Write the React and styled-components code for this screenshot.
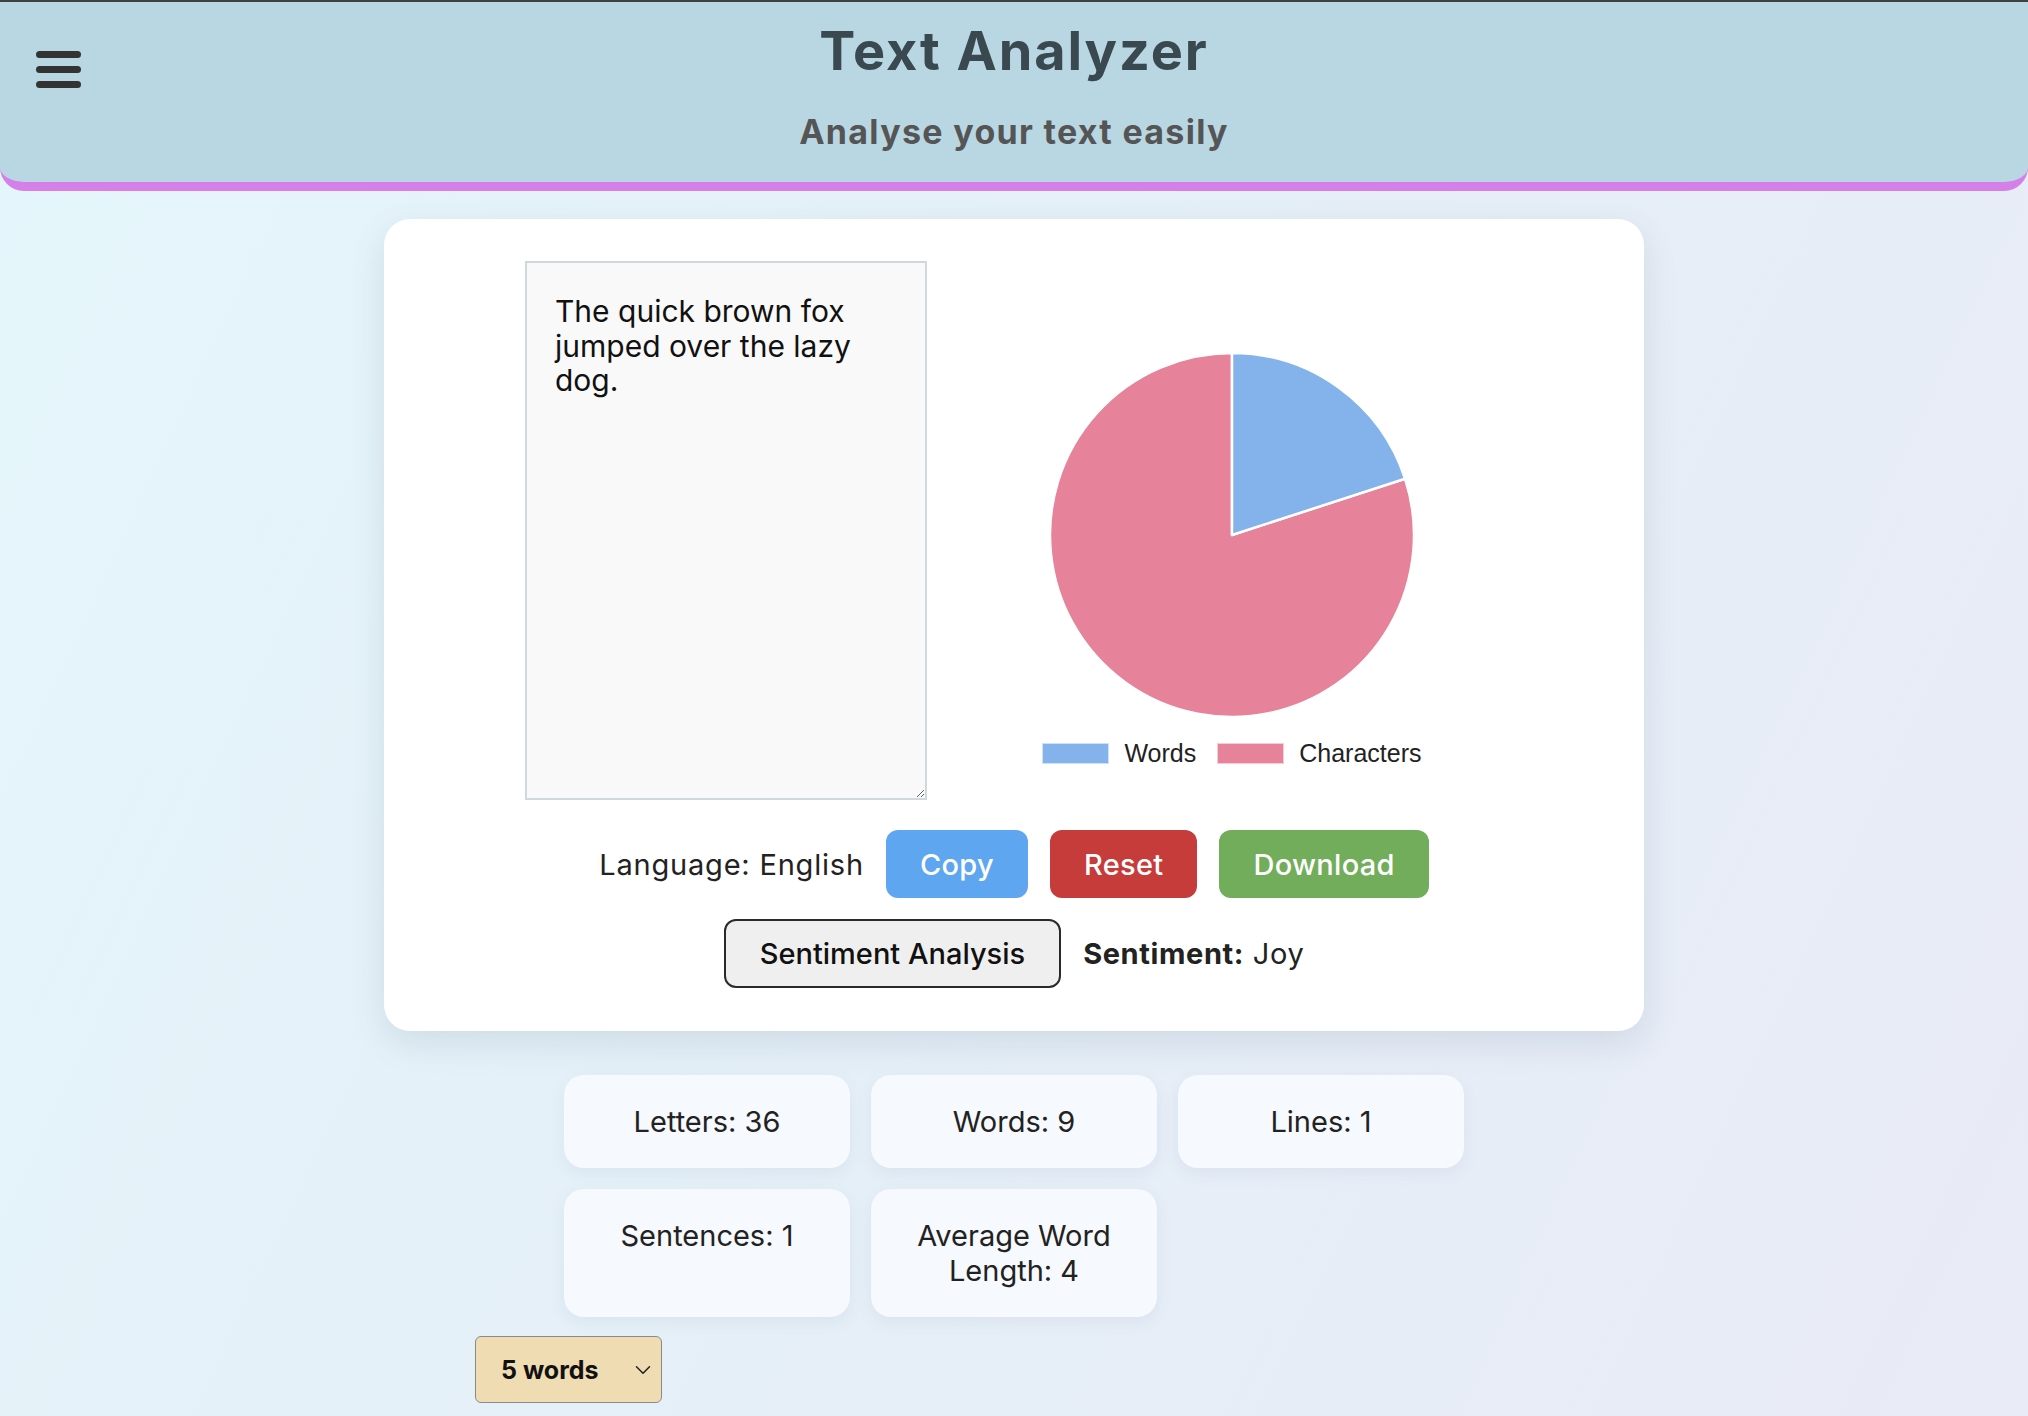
import React from "react";
import styled, { createGlobalStyle } from "styled-components";
import { ChevronDown } from "lucide-react";

const GlobalStyle = createGlobalStyle`
  *, *::before, *::after { box-sizing: border-box; }
  html, body { margin: 0; padding: 0; }
  body {
    min-height: 100vh;
    background: linear-gradient(115deg, #e4f6fb 0%, #e5eff7 50%, #e9ebf6 100%);
    font-family: "Inter", "Noto Sans", sans-serif;
    border-top: 2px solid #403f42;
    color: #222;
  }
`;

const Page = styled.div`
  display: flex;
  flex-direction: column;
  align-items: center;
  padding-bottom: 11px;
`;

const Header = styled.header`
  width: 100%;
  display: grid;
  grid-template-columns: 1fr auto 1fr;
  padding: 17px 36px 30px;
  background: #b9d7e3;
  border-bottom: 9px solid #d580e8;
  border-radius: 0 0 24px 24px;
`;

const MenuButton = styled.div`
  justify-self: start;
  margin-top: 32px;
  display: flex;
  flex-direction: column;
  gap: 8px;
`;

const MenuBar = styled.span`
  display: block;
  width: 45px;
  height: 7px;
  border-radius: 4px;
  background: #333;
`;

const TitleBlock = styled.div`
  text-align: center;
`;

const Title = styled.h1`
  margin: 0;
  font-size: 54px;
  line-height: 64px;
  font-weight: 700;
  color: #3a4850;
  letter-spacing: 1.9px;
`;

const Subtitle = styled.h2`
  margin: 29px 0 0;
  font-size: 34px;
  line-height: 40px;
  font-weight: 700;
  color: #555;
  letter-spacing: 1.3px;
`;

const MainCard = styled.main`
  margin-top: 28px;
  width: 1260px;
  background: #fff;
  border-radius: 26px;
  padding: 42px 0 43px;
  box-shadow: 0 12px 34px rgba(70, 100, 130, 0.14);
`;

const TopRow = styled.div`
  display: flex;
  justify-content: center;
  gap: 34px;
`;

const TextArea = styled.textarea`
  width: 402px;
  height: 539px;
  border: 2px solid #cfd8dd;
  background: #f9f9f9;
  padding: 31px 28px;
  font-family: "Inter", "Noto Sans", sans-serif;
  font-size: 30px;
  line-height: 34.5px;
  color: #111;
  outline: none;
  resize: both;
`;

const ChartCol = styled.div`
  width: 542px;
  display: flex;
  flex-direction: column;
  align-items: center;
  padding-top: 90px;
`;

const Legend = styled.div`
  margin-top: 20px;
  display: flex;
  align-items: center;
  gap: 21px;
  font-family: "Liberation Sans", Arial, sans-serif;
  font-size: 25px;
  line-height: 28px;
  color: #222;
`;

const LegendItem = styled.div`
  display: flex;
  align-items: center;
  gap: 15px;
`;

const Swatch = styled.span`
  display: block;
  width: 67px;
  height: 21px;
  background: ${(p) => p.$color};
  border: 1px solid rgba(255, 255, 255, 0.6);
`;

const ControlsRow = styled.div`
  margin-top: ${(p) => p.$mt}px;
  display: flex;
  justify-content: center;
  align-items: center;
  gap: 22px;
`;

const Label = styled.span`
  font-size: 29px;
  color: #222;
  letter-spacing: 0.8px;
`;

const ActionButton = styled.button`
  height: 68px;
  padding: 0 34px;
  border: none;
  border-radius: 12px;
  background: ${(p) => p.$bg};
  color: #fff;
  font-family: "Inter", "Noto Sans", sans-serif;
  font-size: 29px;
  font-weight: 500;
  letter-spacing: 0.3px;
  cursor: pointer;
`;

const OutlineButton = styled.button`
  height: 69px;
  padding: 0 34px;
  border: 2px solid #2a2a2a;
  border-radius: 12px;
  background: #efefef;
  color: #111;
  font-family: "Inter", "Noto Sans", sans-serif;
  font-size: 29px;
  font-weight: 500;
  cursor: pointer;
`;

const SentimentText = styled.span`
  font-size: 29px;
  color: #222;
  letter-spacing: 0.6px;
  strong {
    font-weight: 700;
  }
`;

const StatsGrid = styled.section`
  margin-top: 44px;
  display: grid;
  grid-template-columns: repeat(3, 286px);
  gap: 21px;
  justify-content: center;
`;

const StatCard = styled.div`
  background: #f6f9fd;
  border-radius: 20px;
  padding: 29px;
  text-align: center;
  font-size: 29px;
  line-height: 35px;
  color: #222;
  box-shadow: 0 5px 16px rgba(80, 110, 150, 0.08);
`;

const SelectRow = styled.div`
  width: 1078px;
  margin-top: 19px;
`;

const SelectWrap = styled.div`
  position: relative;
  display: inline-block;
`;

const Select = styled.select`
  appearance: none;
  -webkit-appearance: none;
  width: 187px;
  height: 67px;
  padding: 0 0 0 25px;
  background: #efdcb3;
  border: 1px solid #8a8a8a;
  border-radius: 6px;
  font-family: "Inter", "Noto Sans", sans-serif;
  font-size: 25px;
  font-weight: 700;
  color: #111;
`;

const SelectIcon = styled.span`
  position: absolute;
  right: 6px;
  top: 50%;
  transform: translateY(-50%);
  display: flex;
  color: #222;
  pointer-events: none;
`;

function PieChart() {
  const c = 184;
  const r = 182;
  const ang = (72 * Math.PI) / 180;
  const ex = c + r * Math.sin(ang);
  const ey = c - r * Math.cos(ang);
  return (
    <svg width="368" height="368" viewBox="0 0 368 368">
      <path
        d={`M${c},${c} L${ex},${ey} A${r},${r} 0 1 1 ${c},${c - r} Z`}
        fill="#e6829a"
        stroke="#fff"
        strokeWidth="2.5"
        strokeLinejoin="round"
      />
      <path
        d={`M${c},${c} L${c},${c - r} A${r},${r} 0 0 1 ${ex},${ey} Z`}
        fill="#84b3ec"
        stroke="#fff"
        strokeWidth="2.5"
        strokeLinejoin="round"
      />
    </svg>
  );
}

const stats = [
  "Letters: 36",
  "Words: 9",
  "Lines: 1",
  "Sentences: 1",
  "Average Word Length: 4",
];

export default function App() {
  return (
    <>
      <GlobalStyle />
      <Page>
        <Header>
          <MenuButton aria-label="menu">
            <MenuBar />
            <MenuBar />
            <MenuBar />
          </MenuButton>
          <TitleBlock>
            <Title>Text Analyzer</Title>
            <Subtitle>Analyse your text easily</Subtitle>
          </TitleBlock>
        </Header>

        <MainCard>
          <TopRow>
            <TextArea defaultValue="The quick brown fox jumped over the lazy dog." />
            <ChartCol>
              <PieChart />
              <Legend>
                <LegendItem>
                  <Swatch $color="#84b3ec" />
                  <span>Words</span>
                </LegendItem>
                <LegendItem>
                  <Swatch $color="#e6829a" />
                  <span>Characters</span>
                </LegendItem>
              </Legend>
            </ChartCol>
          </TopRow>

          <ControlsRow $mt={30}>
            <Label>Language: English</Label>
            <ActionButton $bg="#5fa6f1">Copy</ActionButton>
            <ActionButton $bg="#c63c3b">Reset</ActionButton>
            <ActionButton $bg="#72ad5b">Download</ActionButton>
          </ControlsRow>

          <ControlsRow $mt={21}>
            <OutlineButton>Sentiment Analysis</OutlineButton>
            <SentimentText>
              <strong>Sentiment:</strong> Joy
            </SentimentText>
          </ControlsRow>
        </MainCard>

        <StatsGrid>
          {stats.map((s) => (
            <StatCard key={s}>{s}</StatCard>
          ))}
        </StatsGrid>

        <SelectRow>
          <SelectWrap>
            <Select defaultValue="5">
              <option value="5">5 words</option>
              <option value="10">10 words</option>
              <option value="20">20 words</option>
            </Select>
            <SelectIcon>
              <ChevronDown size={26} strokeWidth={1.4} />
            </SelectIcon>
          </SelectWrap>
        </SelectRow>
      </Page>
    </>
  );
}
